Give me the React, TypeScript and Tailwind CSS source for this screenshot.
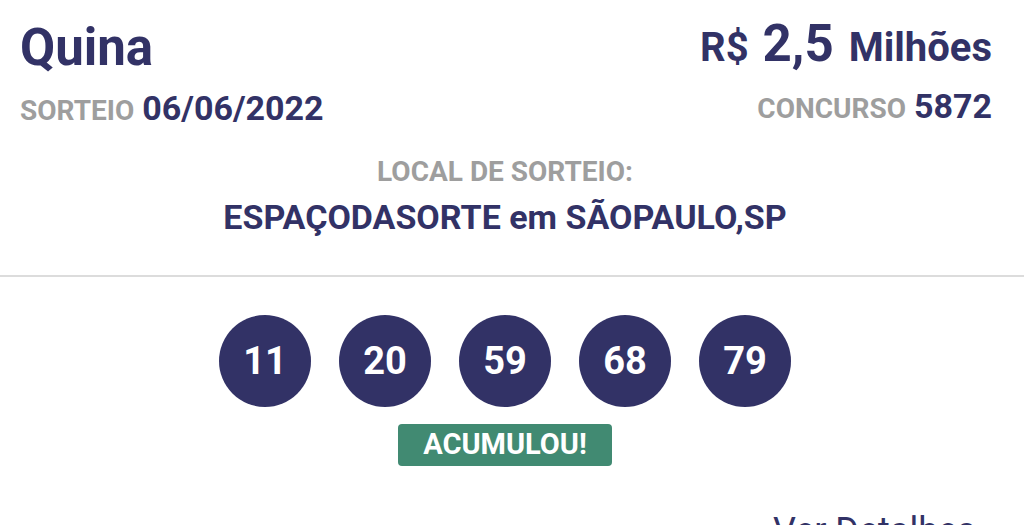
import React from "react";

const NAVY = "text-[#323266]";

export default function App() {
  const nums = ["11", "20", "59", "68", "79"];
  return (
    <div className="w-[1024px] h-[525px] overflow-hidden bg-white font-['Roboto',sans-serif]">
      <div className="flex justify-between pl-[20px] pr-[32px]">
        <div className="flex flex-col pt-[22px]">
          <div className={`text-[51px] leading-none font-bold ${NAVY}`}>Quina</div>
          <div className="mt-[18px] flex items-baseline gap-[8px]">
            <span className="text-[28px] leading-none font-bold text-[#9e9e9e]">SORTEIO</span>
            <span className={`text-[34px] leading-none font-bold ${NAVY}`}>06/06/2022</span>
          </div>
        </div>
        <div className="flex flex-col items-end pt-[18px]">
          <div className={`flex items-baseline font-bold ${NAVY} leading-none`}>
            <span className="text-[40px]">R$</span>
            <span className="ml-[14px] text-[51px]">2,5</span>
            <span className="ml-[15px] text-[40px]">Milhões</span>
          </div>
          <div className="mt-[20px] flex items-baseline gap-[8px]">
            <span className="text-[28px] leading-none font-bold text-[#9e9e9e]">CONCURSO</span>
            <span className={`text-[34px] leading-none font-bold ${NAVY}`}>5872</span>
          </div>
        </div>
      </div>

      <div className="mt-[33px] flex flex-col items-center pr-[14px]">
        <div className="text-[28px] leading-none font-bold text-[#9e9e9e]">LOCAL DE SORTEIO:</div>
        <div className={`mt-[14px] text-[34px] leading-none font-bold ${NAVY}`}>
          ESPAÇODASORTE em SÃOPAULO,SP
        </div>
      </div>

      <div className="mt-[41px] h-[2px] bg-[#dcdcdc]" />

      <div className="mt-[38px] flex justify-center gap-[28px] pr-[14px]">
        {nums.map((n) => (
          <div
            key={n}
            className="w-[92px] h-[92px] rounded-full bg-[#323266] flex items-center justify-center text-white text-[38px] font-bold"
          >
            {n}
          </div>
        ))}
      </div>

      <div className="mt-[17px] flex justify-center pr-[14px]">
        <div className="w-[214px] h-[42px] rounded-[4px] bg-[#418a72] flex items-center justify-center text-white text-[29px] font-bold">
          ACUMULOU!
        </div>
      </div>

      <div className="mt-[47px] flex pl-[773px]">
        <span className="text-[36px] leading-none whitespace-nowrap text-[#323266]">Ver Detalhes</span>
      </div>
    </div>
  );
}
